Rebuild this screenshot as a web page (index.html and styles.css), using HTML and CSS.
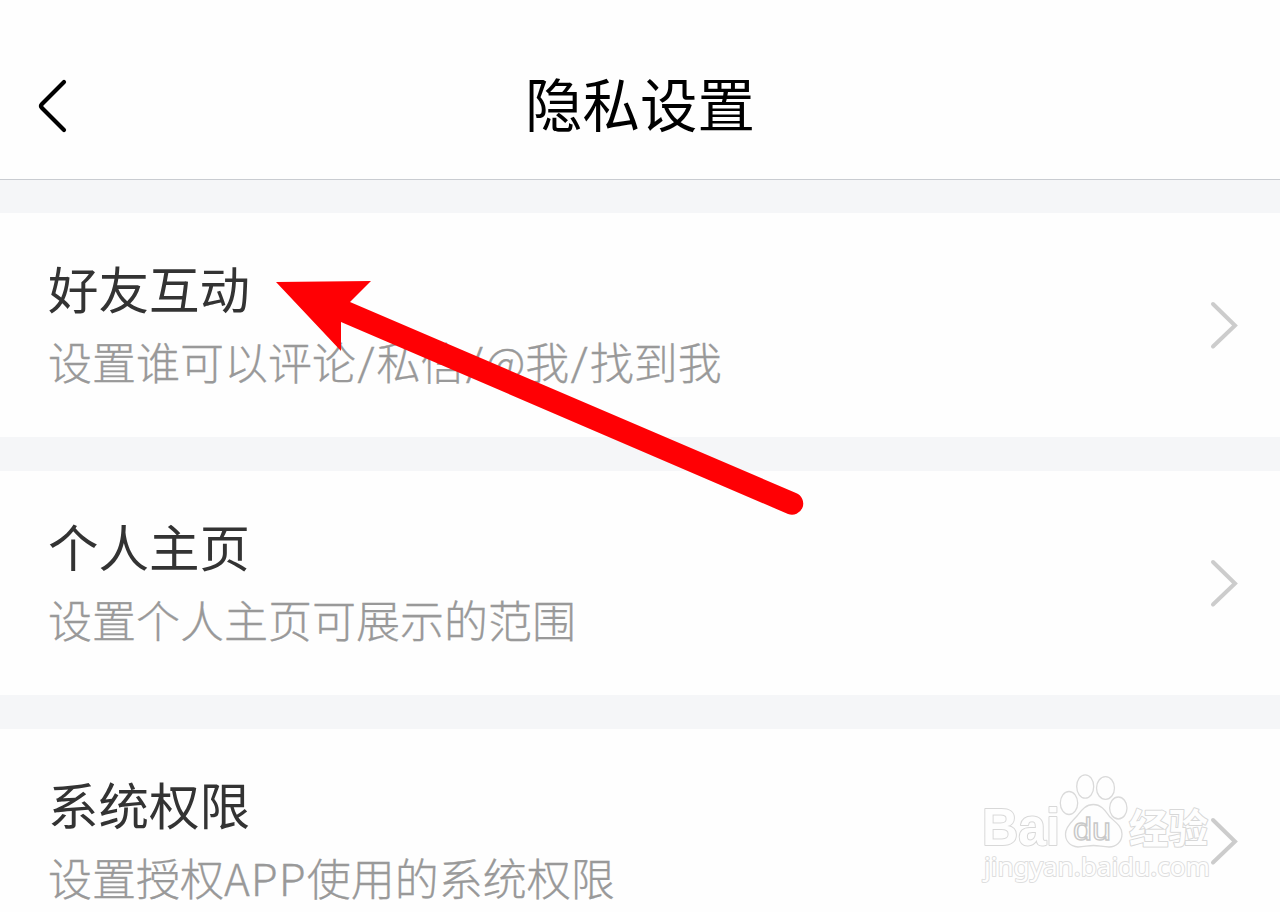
FILE: index.html
```html
<!DOCTYPE html>
<html lang="zh-CN">

<head>
    <meta charset="UTF-8">
    <meta name="viewport" content="width=device-width, initial-scale=1.0">
    <title>隐私设置</title>
    <link rel="stylesheet" href="styles.css">
</head>

<body>
    <div class="container">
        <header class="header">
            <svg class="back" viewBox="0 0 32 56" width="32" height="56">
                <path d="M28 4 L6 26 Q4 28 6 30 L28 52" />
            </svg>
            <h1>隐私设置</h1>
        </header>

        <main class="settings">
            <div class="item">
                <div class="item-text">
                    <h2>好友互动</h2>
                    <p>设置谁可以评论<span class="slash">/</span>私信<span class="slash">/</span>@我<span class="slash">/</span>找到我</p>
                </div>
                <svg class="chevron" viewBox="0 0 30 50" width="30" height="50">
                    <path d="M4 4 L26 25.5 L4 46.5" />
                </svg>
            </div>
            <div class="item">
                <div class="item-text">
                    <h2>个人主页</h2>
                    <p>设置个人主页可展示的范围</p>
                </div>
                <svg class="chevron" viewBox="0 0 30 50" width="30" height="50">
                    <path d="M4 4 L26 25.5 L4 46.5" />
                </svg>
            </div>
            <div class="item">
                <div class="item-text">
                    <h2>系统权限</h2>
                    <p>设置授权<span class="latin">APP</span>使用的系统权限</p>
                </div>
                <svg class="chevron" viewBox="0 0 30 50" width="30" height="50">
                    <path d="M4 4 L26 25.5 L4 46.5" />
                </svg>
            </div>
        </main>

        <!-- Red arrow -->
        <svg class="arrow" viewBox="270 270 540 250" width="540" height="250">
            <path d="M276 282 L371 281 L350 302 L796 493 A11 11 0 0 1 788 514 L341 322 L341 351 Z" />
        </svg>

        <!-- Watermark -->
        <svg class="watermark" viewBox="970 765 250 130" width="250" height="130">
            <text class="mark-text" x="982" y="845" font-size="51" textLength="78" lengthAdjust="spacingAndGlyphs">Bai</text>
            <g class="paw">
                <ellipse cx="1069" cy="803" rx="8.7" ry="11.5" />
                <ellipse cx="1085.2" cy="786.5" rx="8.5" ry="11.7" />
                <ellipse cx="1105.5" cy="788" rx="9" ry="11.3" />
                <ellipse cx="1118.3" cy="808" rx="8.7" ry="11" />
                <path d="M1093.5 804.5 C1102 804.5 1106 812 1110 817 C1115 822 1122 826 1122 834 C1122 842 1116 847 1109 847 C1103 847 1099 845.5 1093.5 845.5 C1088 845.5 1084 847 1078 847 C1070 846 1065.5 841 1065.5 834 C1065.5 826 1073 821 1077 816 C1081 811 1085 804.5 1093.5 804.5 Z" />
            </g>
            <text class="mark-du" x="1073" y="840" font-size="32" textLength="38" lengthAdjust="spacingAndGlyphs">du</text>
            <text class="mark-text mark-cn" x="1129" y="843" font-size="39.5">经验</text>
            <text class="mark-url" x="984" y="876" font-size="26" textLength="226" lengthAdjust="spacingAndGlyphs">jingyan.baidu.com</text>
        </svg>
    </div>
</body>

</html>
```
FILE: styles.css
```css
* {
    box-sizing: border-box;
}

body {
    font-family: "Noto Sans CJK SC", sans-serif;
    margin: 0;
    padding: 0;
    background-color: #fefefe;
}

.container {
    position: relative;
    height: 912px;
    overflow: hidden;
}

.header {
    display: grid;
    grid-template-columns: 100px 1fr 100px;
    align-items: center;
    height: 180px;
    padding-top: 32px;
    border-bottom: 1px solid #c9ccd1;
}

.back {
    margin-left: 36px;
    fill: none;
    stroke: #000;
    stroke-width: 4.2;
    stroke-linecap: round;
}

h1 {
    margin: 0;
    padding-bottom: 7px;
    font-size: 57.5px;
    font-weight: 400;
    line-height: 80px;
    text-align: center;
    color: #000;
}

.settings {
    display: flex;
    flex-direction: column;
    gap: 34px;
    padding-top: 33px;
    background-color: #f5f6f8;
}

.item {
    display: flex;
    justify-content: space-between;
    align-items: center;
    height: 224px;
    padding: 0 41px 0 48px;
    background-color: #fefefe;
}

.item-text {
    padding-bottom: 2px;
}

.item-text h2 {
    margin: 0;
    font-size: 50.5px;
    font-weight: 400;
    line-height: 74px;
    color: #333;
}

.item-text p {
    height: 74px;
    margin: 0;
    font-size: 44px;
    font-weight: 300;
    line-height: 74px;
    color: #999;
    -webkit-text-stroke: 0.3px #999;
}

.slash {
    display: inline-block;
    width: 20.6px;
    font-family: Roboto, sans-serif;
    font-size: 47px;
    line-height: 1;
    text-align: center;
}

.latin {
    letter-spacing: 1px;
}

.chevron {
    fill: none;
    stroke: #ccc;
    stroke-width: 4;
    stroke-linecap: round;
}

.arrow {
    position: absolute;
    left: 270px;
    top: 270px;
    fill: #ff0004;
}

.watermark {
    position: absolute;
    left: 970px;
    top: 765px;
    font-family: "Liberation Sans", sans-serif;
    font-weight: 700;
}

.mark-text {
    fill: #fefefe;
    stroke: #d8d8d8;
    stroke-width: 2;
    stroke-linejoin: round;
    paint-order: stroke;
}

.mark-cn {
    font-family: "Noto Sans CJK SC", sans-serif;
}

.paw {
    fill: #fefefe;
    stroke: #dadada;
    stroke-width: 1.3;
}

.mark-du {
    fill: #fefefe;
    stroke: #c8c8c8;
    stroke-width: 1.4;
    font-weight: 400;
}

.mark-url {
    font-family: "Noto Sans", sans-serif;
    font-weight: 400;
    fill: #fefefe;
    stroke: #dedede;
    stroke-width: 2;
    stroke-linejoin: round;
    paint-order: stroke;
}
```
